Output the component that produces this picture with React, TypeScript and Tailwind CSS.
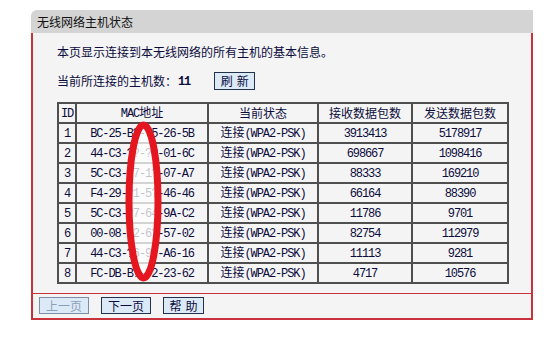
import React from "react";

const rows = [
  { id: 1, mac: "BC-25-B?-?5-26-5B", rx: "3913413", tx: "5178917" },
  { id: 2, mac: "44-C3-??-??-01-6C", rx: "698667", tx: "1098416" },
  { id: 3, mac: "5C-C3-?7-1?-07-A7", rx: "88333", tx: "169210" },
  { id: 4, mac: "F4-29-?1-5?-46-46", rx: "66164", tx: "88390" },
  { id: 5, mac: "5C-C3-?7-64-9A-C2", rx: "11786", tx: "9701" },
  { id: 6, mac: "00-08-?2-6?-57-02", rx: "82754", tx: "112979" },
  { id: 7, mac: "44-C3-?6-9?-A6-16", rx: "11113", tx: "9281" },
  { id: 8, mac: "FC-DB-B?-?2-23-62", rx: "4717", tx: "10576" },
];

const cjk = { fontFamily: '"Noto Sans CJK SC", "Noto Sans", sans-serif' };
const mono = { fontFamily: '"Liberation Mono", "Noto Sans CJK SC", monospace' };

function Mono({ children, bold }: { children: React.ReactNode; bold?: boolean }) {
  return (
    <span style={mono} className={`text-[12px] tracking-[-1.1px] ${bold ? "font-bold" : ""}`}>
      {children}
    </span>
  );
}

const cell = "h-[20px] border-2 border-[#4f4f4f] p-0 text-center align-middle leading-none";

export default function App() {
  return (
    <div className="min-h-[342px] w-[558px] bg-white pt-[10px]" style={cjk}>
      <div className="relative ml-[31px] w-[502px]">
        <div className="flex h-[23px] items-center rounded-tl-[6px] bg-[#d4d4d4] pl-[6px] text-[12px] text-[#111]">
          无线网络主机状态
        </div>

        <div className="border-x-2 border-b-2 border-[#c8323c] bg-[#f4f4f4] text-[#0b0b3c]">
          <div className="pl-[24px] pt-[10px]">
            <div className="flex h-[18px] items-center text-[12px]">本页显示连接到本无线网络的所有主机的基本信息。</div>
            <div className="mt-[11px] flex h-[18px] items-center text-[12px]">
              <span>当前所连接的主机数：</span>
              <span className="ml-[1px]">
                <Mono bold>11</Mono>
              </span>
              <button className="ml-[24px] flex h-[18px] w-[41px] items-center justify-center gap-[4px] border border-[#22324a] bg-[#dce9f7] text-[12px] text-[#0b0b3c]">
                <span>刷</span>
                <span>新</span>
              </button>
            </div>

            <table className="mt-[12px] w-[450px] table-fixed border-collapse border-2 border-[#4f4f4f] text-[12px]">
              <colgroup>
                <col className="w-[18px]" />
                <col className="w-[132px]" />
                <col className="w-[110px]" />
                <col className="w-[94px]" />
                <col className="w-[96px]" />
              </colgroup>
              <thead>
                <tr>
                  <th className={`${cell} font-normal`}>
                    <Mono>ID</Mono>
                  </th>
                  <th className={`${cell} font-normal`}>
                    <Mono>MAC</Mono>地址
                  </th>
                  <th className={`${cell} font-normal`}>当前状态</th>
                  <th className={`${cell} font-normal`}>接收数据包数</th>
                  <th className={`${cell} font-normal`}>发送数据包数</th>
                </tr>
              </thead>
              <tbody>
                {rows.map((r) => (
                  <tr key={r.id}>
                    <td className={cell}>
                      <Mono>{r.id}</Mono>
                    </td>
                    <td className={cell}>
                      <Mono>{r.mac}</Mono>
                    </td>
                    <td className={cell}>
                      连接<Mono>(WPA2-PSK)</Mono>
                    </td>
                    <td className={cell}>
                      <Mono>{r.rx}</Mono>
                    </td>
                    <td className={cell}>
                      <Mono>{r.tx}</Mono>
                    </td>
                  </tr>
                ))}
              </tbody>
            </table>
          </div>

          <div className="mt-[9px] flex gap-[12px] border-t border-[#c8323c] pb-[4px] pl-[6px] pt-[3px] text-[12px]">
            <button className="flex h-[17px] w-[50px] items-center justify-center border border-[#7b8ea8] bg-[#dce9f7] text-[#8c9fb8]">
              上一页
            </button>
            <button className="flex h-[17px] w-[50px] items-center justify-center border border-[#22324a] bg-[#dce9f7]">
              下一页
            </button>
            <button className="flex h-[17px] w-[41px] items-center justify-center gap-[4px] border border-[#22324a] bg-[#dce9f7]">
              <span>帮</span>
              <span>助</span>
            </button>
          </div>
        </div>

        {/* red marker scribble over the MAC column */}
        <svg className="absolute left-[94px] top-[111px]" width="37" height="161" viewBox="0 0 37 161">
          <ellipse cx="18.5" cy="80.5" rx="14.5" ry="76.5" fill="white" fillOpacity="0.75" stroke="#e5161f" strokeWidth="7" />
        </svg>
      </div>
    </div>
  );
}
